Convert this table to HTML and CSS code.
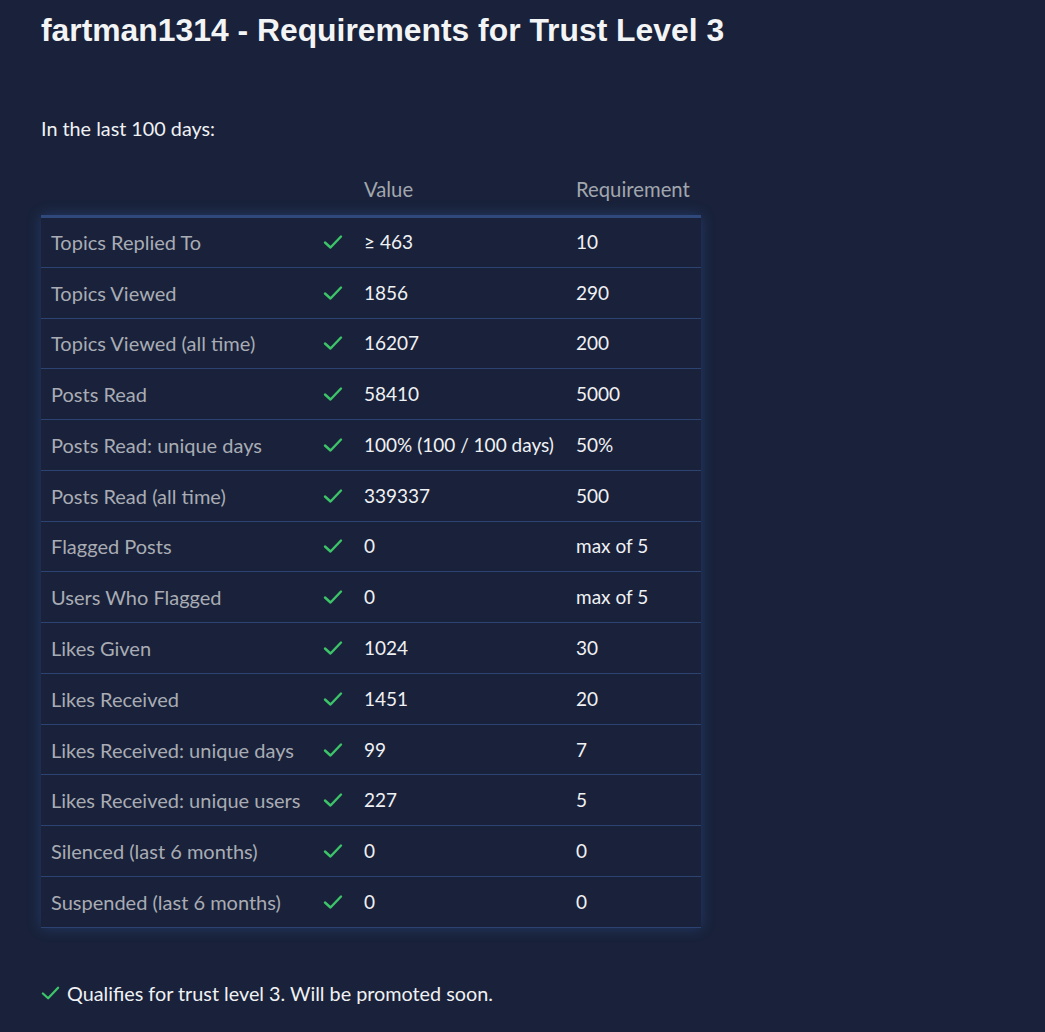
FILE: index.html
```html
<!DOCTYPE html>
<html>
<head>
<meta charset="utf-8">
<link rel="stylesheet" href="styles.css">
</head>
<body>
<div class="page">
  <h1 class="title">fartman1314 - Requirements for Trust Level 3</h1>
  <p class="period">In the last 100 days:</p>
  <div class="head">
    <span class="c-label"></span><span class="c-check"></span><span class="c-value">Value</span><span class="c-req">Requirement</span>
  </div>
  <table class="reqs">
    <tbody>
      <tr><td class="c-label">Topics Replied To</td><td class="c-check"><svg class="ck" viewBox="0 0 20 16"><path d="M2 8.5 L7.5 13.5 L18 2.5"/></svg></td><td class="c-value">≥ 463</td><td class="c-req">10</td></tr>
      <tr><td class="c-label">Topics Viewed</td><td class="c-check"><svg class="ck" viewBox="0 0 20 16"><path d="M2 8.5 L7.5 13.5 L18 2.5"/></svg></td><td class="c-value">1856</td><td class="c-req">290</td></tr>
      <tr><td class="c-label">Topics Viewed (all time)</td><td class="c-check"><svg class="ck" viewBox="0 0 20 16"><path d="M2 8.5 L7.5 13.5 L18 2.5"/></svg></td><td class="c-value">16207</td><td class="c-req">200</td></tr>
      <tr><td class="c-label">Posts Read</td><td class="c-check"><svg class="ck" viewBox="0 0 20 16"><path d="M2 8.5 L7.5 13.5 L18 2.5"/></svg></td><td class="c-value">58410</td><td class="c-req">5000</td></tr>
      <tr><td class="c-label">Posts Read: unique days</td><td class="c-check"><svg class="ck" viewBox="0 0 20 16"><path d="M2 8.5 L7.5 13.5 L18 2.5"/></svg></td><td class="c-value">100% (100 / 100 days)</td><td class="c-req">50%</td></tr>
      <tr><td class="c-label">Posts Read (all time)</td><td class="c-check"><svg class="ck" viewBox="0 0 20 16"><path d="M2 8.5 L7.5 13.5 L18 2.5"/></svg></td><td class="c-value">339337</td><td class="c-req">500</td></tr>
      <tr><td class="c-label">Flagged Posts</td><td class="c-check"><svg class="ck" viewBox="0 0 20 16"><path d="M2 8.5 L7.5 13.5 L18 2.5"/></svg></td><td class="c-value">0</td><td class="c-req">max of 5</td></tr>
      <tr><td class="c-label">Users Who Flagged</td><td class="c-check"><svg class="ck" viewBox="0 0 20 16"><path d="M2 8.5 L7.5 13.5 L18 2.5"/></svg></td><td class="c-value">0</td><td class="c-req">max of 5</td></tr>
      <tr><td class="c-label">Likes Given</td><td class="c-check"><svg class="ck" viewBox="0 0 20 16"><path d="M2 8.5 L7.5 13.5 L18 2.5"/></svg></td><td class="c-value">1024</td><td class="c-req">30</td></tr>
      <tr><td class="c-label">Likes Received</td><td class="c-check"><svg class="ck" viewBox="0 0 20 16"><path d="M2 8.5 L7.5 13.5 L18 2.5"/></svg></td><td class="c-value">1451</td><td class="c-req">20</td></tr>
      <tr><td class="c-label">Likes Received: unique days</td><td class="c-check"><svg class="ck" viewBox="0 0 20 16"><path d="M2 8.5 L7.5 13.5 L18 2.5"/></svg></td><td class="c-value">99</td><td class="c-req">7</td></tr>
      <tr><td class="c-label">Likes Received: unique users</td><td class="c-check"><svg class="ck" viewBox="0 0 20 16"><path d="M2 8.5 L7.5 13.5 L18 2.5"/></svg></td><td class="c-value">227</td><td class="c-req">5</td></tr>
      <tr><td class="c-label">Silenced (last 6 months)</td><td class="c-check"><svg class="ck" viewBox="0 0 20 16"><path d="M2 8.5 L7.5 13.5 L18 2.5"/></svg></td><td class="c-value">0</td><td class="c-req">0</td></tr>
      <tr><td class="c-label">Suspended (last 6 months)</td><td class="c-check"><svg class="ck" viewBox="0 0 20 16"><path d="M2 8.5 L7.5 13.5 L18 2.5"/></svg></td><td class="c-value">0</td><td class="c-req">0</td></tr>
    </tbody>
  </table>
  <p class="result"><svg class="ck ck-result" viewBox="0 0 20 16"><path d="M2 8.5 L7.5 13.5 L18 2.5"/></svg>Qualifies for trust level 3. Will be promoted soon.</p>
</div>
</body>
</html>
```

FILE: styles.css
```css
html, body {
  margin: 0;
  padding: 0;
  background: #19223a;
}
.page {
  padding: 0 41px;
  font-family: Lato, "Open Sans", sans-serif;
  color: #eef0f3;
}
.title {
  margin: 0;
  padding-top: 10px;
  font-family: "Liberation Sans", Arial, sans-serif;
  font-weight: bold;
  font-size: 31.85px;
  line-height: 40px;
  color: #f3f4f6;
}
.period {
  margin: 65px 0 0;
  font-size: 19.8px;
  line-height: 26px;
  color: #f0f1f4;
}
.head {
  display: flex;
  width: 660px;
  margin-top: 35px;
  height: 39px;
  font-size: 20.3px;
  line-height: 26px;
  color: #a2a6ae;
}
.head span {
  box-sizing: border-box;
  padding: 0 10px;
  flex: none;
}
.head .c-label { width: 272px; }
.head .c-check { width: 41px; }
.head .c-value { width: 212px; color: #a2a6ae; }
.head .c-req { width: 135px; color: #a2a6ae; }
.reqs {
  border-collapse: collapse;
  width: 660px;
  table-layout: fixed;
  border-top: 3px solid #30497c;
  border-bottom: 1px solid #30497c;
  box-shadow: 0 0 12px rgba(55, 95, 175, 0.4);
  background: #19223a;
}
.reqs td {
  height: 50.77px;
  padding: 0 10px;
  border-bottom: 1px solid #2c4270;
  box-sizing: border-box;
  line-height: 24px;
  white-space: nowrap;
}
.reqs td.c-label { width: 272px; color: #a9acb4; font-size: 20px; }
.reqs td.c-check { width: 41px; }
.reqs td.c-value { width: 212px; color: #f0f1f4; font-size: 19px; }
.reqs td.c-req { width: 135px; color: #f0f1f4; font-size: 19px; }
.ck {
  display: block;
  width: 20px;
  height: 16px;
  fill: none;
  stroke: #3dc469;
  stroke-width: 2.4;
  stroke-linecap: round;
  stroke-linejoin: round;
}
.result {
  margin: 52px 0 0;
  display: flex;
  align-items: center;
  gap: 7px;
  font-size: 19.8px;
  line-height: 26px;
  color: #f0f1f4;
}
.ck-result { width: 19px; }
```
